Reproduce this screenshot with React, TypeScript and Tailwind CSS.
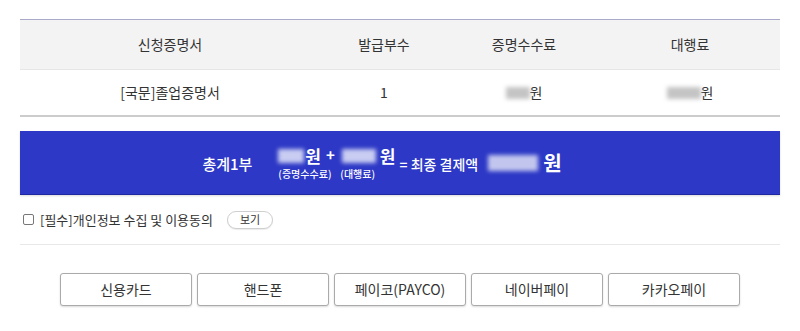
const font = { fontFamily: '"Noto Sans CJK KR", "Noto Sans", sans-serif' };

const payMethods = ["신용카드", "핸드폰", "페이코(PAYCO)", "네이버페이", "카카오페이"];

// blurred amount placeholder
function Blur({ className }: { className: string }) {
  return <span className={`inline-block blur-[2px] ${className}`} />;
}

export default function App() {
  return (
    <div className="w-[800px] h-[331px] bg-white text-[#333] px-5 pt-[19px]" style={font}>
      {/* 결제 내역 테이블 */}
      <div className="border-t border-[#a9a9c9]">
        <div className="grid grid-cols-[300px_128px_152px_180px] h-[50px] items-center bg-[#f3f3f3] border-b border-[#e6e6e6] text-[14px]">
          <div className="text-center">신청증명서</div>
          <div className="text-center">발급부수</div>
          <div className="text-center">증명수수료</div>
          <div className="text-center">대행료</div>
        </div>
        <div className="grid grid-cols-[300px_128px_152px_180px] h-[47px] items-center border-b-2 border-[#cccccc] text-[14px]">
          <div className="text-center">[국문]졸업증명서</div>
          <div className="text-center">1</div>
          <div className="flex items-center justify-center">
            <Blur className="w-[24px] h-[12px] bg-[#c4c4c4]" />
            <span>원</span>
          </div>
          <div className="flex items-center justify-center">
            <Blur className="w-[34px] h-[12px] bg-[#c4c4c4]" />
            <span>원</span>
          </div>
        </div>
      </div>

      {/* 총계 */}
      <div className="mt-[14px] h-[64px] bg-[#2d38c6] border-b border-[#1e28a0] shadow-[0_1px_2px_rgba(0,0,0,0.15)] flex items-center justify-center pr-[36px] text-white">
        <span className="text-[15px] font-medium mt-[4px] mr-[26px]">총계1부</span>
        <div className="flex flex-col items-start">
          <div className="flex items-center h-[20px]">
            <Blur className="w-[26px] h-[14px] bg-[#c9cdf2]" />
            <span className="text-[17px] font-bold ml-[1px]">원</span>
            <span className="text-[15px] font-bold ml-[5px] mr-[7px]">+</span>
            <Blur className="w-[34px] h-[14px] bg-[#c9cdf2]" />
            <span className="text-[17px] font-bold ml-[4px]">원</span>
          </div>
          <div className="flex text-[10px] font-medium leading-[12px] mt-[2px]">
            <span className="w-[62px]">(증명수수료)</span>
            <span>(대행료)</span>
          </div>
        </div>
        <span className="text-[14px] font-medium ml-[4px] mt-[4px]">= 최종 결제액</span>
        <Blur className="w-[50px] h-[16px] bg-[#c2c6ee] ml-[10px]" />
        <span className="text-[20px] font-bold ml-[5px]">원</span>
      </div>

      {/* 동의 */}
      <div className="flex items-center h-[50px] border-b border-[#e8e8e8] text-[13px] pl-[3px]">
        <span className="w-[11px] h-[11px] border border-[#777] rounded-[2px] mr-[6px]" />
        <span>[필수]개인정보 수집 및 이용동의</span>
        <button className="ml-[14px] w-[46px] h-[18px] rounded-full border border-[#cfcfcf] bg-white text-[11px] leading-none shadow-[0_1px_1px_rgba(0,0,0,0.08)]">
          보기
        </button>
      </div>

      {/* 결제 수단 */}
      <div className="flex justify-center gap-[5px] mt-[28px]">
        {payMethods.map((m) => (
          <button
            key={m}
            className="w-[132px] h-[33px] rounded-[3px] border border-[#aaaaaa] bg-white text-[14px] text-[#333] shadow-[0_1px_2px_rgba(0,0,0,0.15)]"
          >
            {m}
          </button>
        ))}
      </div>
    </div>
  );
}
